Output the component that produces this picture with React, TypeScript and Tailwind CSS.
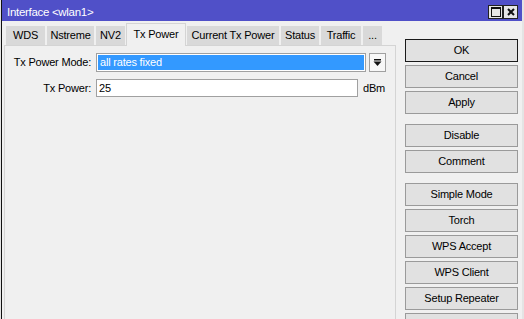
import React from "react";

const Tab = ({ label, w, active }: { label: string; w: number; active?: boolean }) =>
  active ? (
    <div
      className="relative z-10 flex h-[23px] items-center justify-center border-x border-t border-[#d4d4d4] bg-[#f0f0f0] pb-[2px]"
      style={{ width: w }}
    >
      {label}
    </div>
  ) : (
    <div
      className="mt-[2px] flex h-[20px] items-center justify-center border border-[#f0f0f0] border-b-0 bg-[#d9d9d9]"
      style={{ width: w }}
    >
      {label}
    </div>
  );

const Btn = ({ label, focused }: { label: string; focused?: boolean }) => (
  <div
    className={
      "flex h-[23px] w-[113px] items-center justify-center bg-[#e1e1e1] border " +
      (focused ? "border-[#1a1a1a]" : "border-[#9a9a9a]")
    }
  >
    {label}
  </div>
);

export default function App() {
  return (
    <div className="flex h-[319px] w-[524px] overflow-hidden bg-[#f0f0f0] font-['Liberation_Sans',Arial,sans-serif] text-[11px] tracking-[-0.2px] text-black">
      <div className="w-px bg-[#e4e4e4]" />
      <div className="w-px bg-[#111]" />
      <div className="flex w-[520px] flex-col">
        {/* title bar */}
        <div className="flex h-[21px] items-start bg-[#5050c8] text-white">
          <div className="ml-[5px] mt-[4px] text-[11.5px] tracking-[-0.3px]">Interface &lt;wlan1&gt;</div>
          <div className="ml-auto mr-[4px] mt-[5px] flex">
            <div className="flex h-[14px] w-[15px] items-center justify-center border border-[#222] bg-[#e6e6e6]">
              <svg width="10" height="10" viewBox="0 0 10 10">
                <rect x="0.5" y="0.5" width="9" height="9" fill="none" stroke="#111" />
                <rect x="0" y="0" width="10" height="2" fill="#111" />
              </svg>
            </div>
            <div className="flex h-[14px] w-[15px] items-center justify-center border border-[#222] bg-[#e6e6e6]">
              <svg width="8" height="8" viewBox="0 0 8 8">
                <path d="M1 1 L7 7 M7 1 L1 7" stroke="#111" strokeWidth="2" />
              </svg>
            </div>
          </div>
        </div>
        {/* body */}
        <div className="flex flex-1">
          {/* left panel area */}
          <div className="ml-[2px] flex w-[392px] flex-col">
            <div className="mt-[2px] flex pl-px">
              <Tab label="WDS" w={41} />
              <Tab label="Nstreme" w={49} />
              <Tab label="NV2" w={31} />
              <Tab label="Tx Power" w={60} active />
              <Tab label="Current Tx Power" w={94} />
              <Tab label="Status" w={40} />
              <Tab label="Traffic" w={42} />
              <Tab label="..." w={21} />
            </div>
            <div className="-mt-px flex-1 border border-[#d4d4d4] bg-[#f0f0f0] pt-[7px]">
              <div className="flex h-[19px] items-center">
                <div className="w-[86px] text-right">Tx Power Mode:</div>
                <div className="ml-[5px] flex h-[19px] w-[270px] items-center border border-[#a0a0a0] bg-white p-px">
                  <div className="flex h-full w-full items-center bg-[#3399ff] pl-[2px] text-white">all rates fixed</div>
                </div>
                <div className="ml-[3px] flex h-[19px] w-[17px] items-center justify-center border border-[#a0a0a0] bg-[#f7f7f7]">
                  <svg width="9" height="9" viewBox="0 0 9 9">
                    <rect x="1" y="1" width="7" height="1.5" fill="#111" />
                    <path d="M0.5 3.5 L8.5 3.5 L4.5 8 Z" fill="#111" />
                  </svg>
                </div>
              </div>
              <div className="mt-[7px] flex h-[18px] items-center">
                <div className="w-[86px] text-right">Tx Power:</div>
                <div className="ml-[5px] flex h-[18px] w-[262px] items-center border border-[#a0a0a0] bg-white pl-[2px]">25</div>
                <div className="ml-[5px]">dBm</div>
              </div>
            </div>
          </div>
          {/* buttons */}
          <div className="ml-[9px] flex flex-col pt-[18px]">
            <div className="flex flex-col gap-[3px]">
              <Btn label="OK" focused />
              <Btn label="Cancel" />
              <Btn label="Apply" />
            </div>
            <div className="mt-[10px] flex flex-col gap-[3px]">
              <Btn label="Disable" />
              <Btn label="Comment" />
            </div>
            <div className="mt-[10px] flex flex-col gap-[3px]">
              <Btn label="Simple Mode" />
              <Btn label="Torch" />
              <Btn label="WPS Accept" />
              <Btn label="WPS Client" />
              <Btn label="Setup Repeater" />
              <Btn label="Scanner" />
            </div>
          </div>
        </div>
      </div>
      <div className="w-[2px] bg-[#e4e4e4]" />
    </div>
  );
}
